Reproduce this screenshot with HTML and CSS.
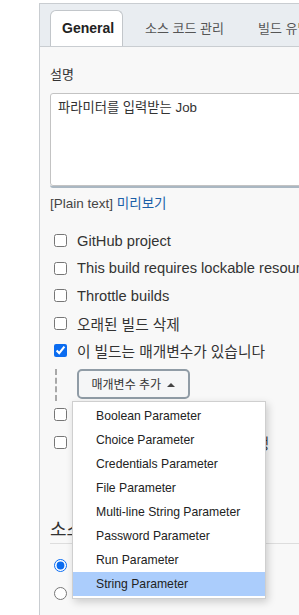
FILE: index.html
```html
<!DOCTYPE html>
<html lang="ko">
<head>
  <meta charset="UTF-8">
  <title>Job 설정</title>
  <link rel="stylesheet" href="styles.css">
</head>
<body>
  <div class="panel">
    <div class="tabs">
      <div class="tab active">General</div>
      <div class="tab">소스 코드 관리</div>
      <div class="tab">빌드 유발</div>
    </div>
    <div class="content">
      <div class="field-label">설명</div>
      <div class="desc-box">
        <textarea class="desc">파라미터를 입력받는 Job</textarea>
      </div>
      <div class="preview">[Plain text] <a href="#">미리보기</a></div>

      <div class="options">
        <label class="option"><input type="checkbox"> GitHub project</label>
        <label class="option"><input type="checkbox"> This build requires lockable resources</label>
        <label class="option"><input type="checkbox"> Throttle builds</label>
        <label class="option"><input type="checkbox"> 오래된 빌드 삭제</label>
        <label class="option"><input type="checkbox" checked> 이 빌드는 매개변수가 있습니다</label>

        <div class="params">
          <button class="add-btn" type="button">매개변수 추가 <span class="caret"></span></button>
          <ul class="menu">
            <li>Boolean Parameter</li>
            <li>Choice Parameter</li>
            <li>Credentials Parameter</li>
            <li>File Parameter</li>
            <li>Multi-line String Parameter</li>
            <li>Password Parameter</li>
            <li>Run Parameter</li>
            <li class="selected">String Parameter</li>
          </ul>
        </div>

        <label class="option"><input type="checkbox"> 빌드 안함</label>
        <label class="option"><input type="checkbox"> 필요할 경우 빌드를 동시에 실행</label>
      </div>

      <h3 class="section">소스 코드 관리</h3>
      <div class="radios">
        <label class="option"><input type="radio" name="scm" checked> None</label>
        <label class="option"><input type="radio" name="scm"> Git</label>
      </div>
    </div>
  </div>
</body>
</html>
```

FILE: styles.css
```css
body {
  margin: 0;
  padding-top: 3px;
  background: #fff;
  font-family: 'Liberation Sans', 'Noto Sans CJK KR', sans-serif;
  color: #333;
  overflow: hidden;
}
.panel {
  margin-left: 39px;
  width: 340px;
  height: 640px;
  border: 1px solid #c9cdd1;
  border-right: none;
  background: #f8f8f8;
}
.tabs {
  display: flex;
  align-items: flex-end;
  height: 42px;
  padding-left: 10px;
  background: #e9edf1;
  border-bottom: 1px solid #c9cdd1;
  overflow: hidden;
}
.tab {
  height: 35px;
  line-height: 35px;
  padding: 0 17px;
  font-size: 13px;
  color: #555;
  white-space: nowrap;
}
.tab.active {
  width: 60px;
  padding: 0 0 0 11px;
  margin-right: 5px;
  background: #fff;
  border: 1px solid #c2c6ca;
  border-bottom: none;
  border-radius: 6px 6px 0 0;
  margin-bottom: -1px;
  height: 36px;
  font-size: 14px;
  font-weight: bold;
  color: #222;
}
.content {
  padding: 19px 0 0 10px;
}
.field-label {
  font-size: 13px;
  line-height: 18px;
  color: #333;
}
.desc-box {
  margin-top: 9px;
  border-bottom: 2px solid #aab7c2;
  border-radius: 3px;
}
.desc {
  display: block;
  width: 100%;
  height: 93px;
  margin: 0;
  padding: 6px 7px;
  box-sizing: border-box;
  border: 1px solid #c3c3c3;
  border-radius: 3px;
  background: #fff;
  font-family: inherit;
  font-size: 13.3px;
  line-height: 16px;
  color: #333;
  resize: none;
}
.preview {
  margin-top: 7px;
  font-size: 13.5px;
  line-height: 18px;
  color: #444;
}
.preview a {
  color: #1b5fa8;
  text-decoration: none;
}
.options {
  margin-top: 14px;
}
.option {
  display: flex;
  align-items: center;
  height: 27.5px;
  font-size: 14.7px;
  color: #333;
  white-space: nowrap;
}
.option input {
  width: 13px;
  height: 13px;
  margin: 0 10px 0 4px;
  accent-color: #0b6cf0;
}
.params {
  position: relative;
  height: 32.5px;
  margin: 4px 0 0 5px;
  padding-left: 20px;
  border-left: 2px dashed #a8a8a8;
}
.add-btn {
  height: 30px;
  width: 113px;
  padding: 0;
  border: 2px solid #909ca6;
  border-radius: 5px;
  background: #f5f6f7;
  font-family: inherit;
  font-size: 12px;
  color: #333;
}
.caret {
  display: inline-block;
  width: 0;
  height: 0;
  margin-left: 3px;
  vertical-align: 2px;
  border-left: 4px solid transparent;
  border-right: 4px solid transparent;
  border-bottom: 4px solid #444;
}
.menu {
  position: absolute;
  left: 15px;
  top: 32px;
  z-index: 5;
  width: 192px;
  margin: 0;
  padding: 2px 0 2px;
  list-style: none;
  background: #fff;
  border: 1px solid #cfcfcf;
  box-shadow: 2px 3px 8px rgba(0,0,0,0.18);
}
.menu li {
  height: 24px;
  line-height: 24px;
  padding-left: 23px;
  font-size: 12.2px;
  color: #222;
}
.menu li.selected {
  background: #abcdfc;
}
.section {
  margin: 62px 0 0;
  padding-bottom: 1px;
  border-bottom: 1px solid #ddd;
  font-size: 18px;
  line-height: 24px;
  font-weight: normal;
  color: #333;
}
.radios {
  margin-top: 8px;
}
```
